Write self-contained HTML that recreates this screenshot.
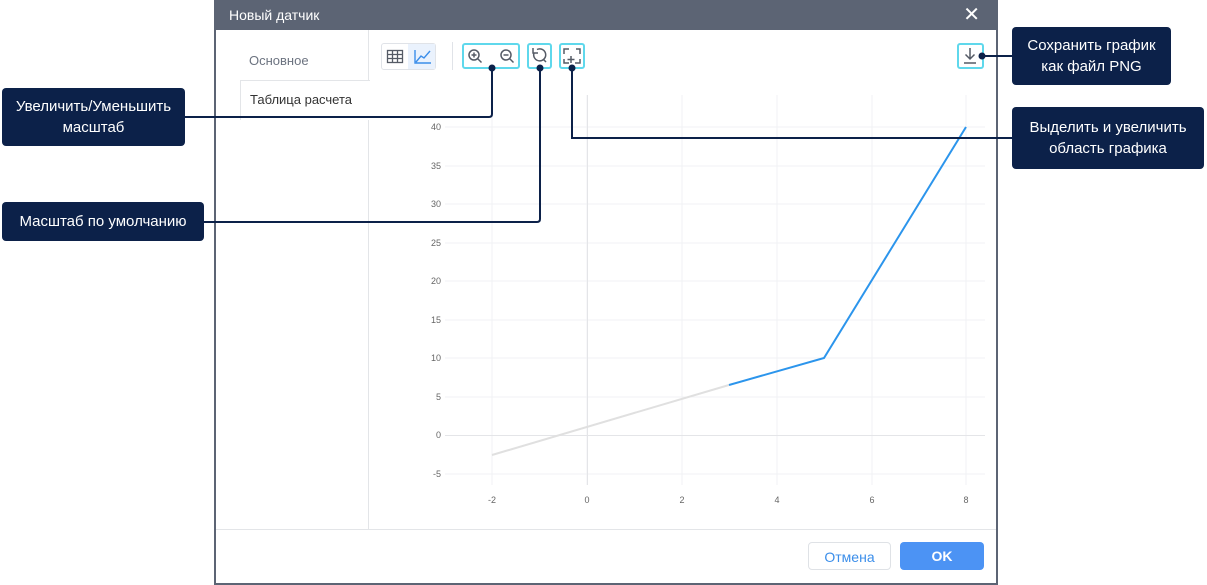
<!DOCTYPE html>
<html><head><meta charset="utf-8"><style>
*{margin:0;padding:0;box-sizing:border-box}
body{width:1207px;height:585px;background:#fff;position:relative;overflow:hidden;font-family:"Liberation Sans",sans-serif}
.dlg{position:absolute;left:214px;top:0;width:784px;height:585px;border:2px solid #5c6474;border-top:none;background:#fff}
.title{position:absolute;left:0;top:0;right:0;height:30px;background:#5c6474;color:#fff;font-size:14px;line-height:30px;padding-left:13px}
.x{position:absolute;right:16px;top:0;color:#fff;font-size:20px;line-height:30px}
.nav{position:absolute;left:0;top:30px;width:153px;bottom:53px;border-right:1px solid #e3e5e8}
.t1{position:absolute;left:33px;top:23px;color:#6c7380;font-size:13px}
.t2{position:absolute;left:24px;top:50px;width:130px;height:40px;border:1px solid #e3e5e8;border-right:none;border-bottom:none;background:#fff;font-size:13px;color:#333;padding:11px 0 0 9px}
.foot{position:absolute;left:0;right:0;bottom:53px;border-top:1px solid #e3e5e8}
.btn{position:absolute;top:542px;height:28px;border-radius:4px;font-size:14px;text-align:center;line-height:28px}
.call{position:absolute;background:#0c2149;color:#fff;font-size:15px;border-radius:4px;text-align:center;display:flex;align-items:center;justify-content:center;line-height:21px}
.hl{position:absolute;border:2px solid #5fd8ec;border-radius:3px}
</style></head><body>
<div class="dlg">
<div class="title">Новый датчик<span class="x">✕</span></div>
<div class="nav"><div class="t1">Основное</div><div class="t2">Таблица расчета</div></div>
<div class="foot"></div>
</div>
<div class="btn" style="left:808px;width:83px;border:1px solid #dfe2e6;color:#3b8eea">Отмена</div>
<div class="btn" style="left:900px;width:84px;background:#4c93f4;color:#fff;font-weight:bold">OK</div>

<!-- toolbar -->
<div style="position:absolute;left:381px;top:43px;width:55px;height:27px;border:1px solid #e0e3e8;border-radius:3px;background:#fff"></div>
<div style="position:absolute;left:408px;top:44px;width:27px;height:25px;background:#eaf2fd"></div>
<div style="position:absolute;left:452px;top:42px;width:1px;height:28px;background:#e0e3e8"></div>
<div class="hl" style="left:462px;top:43px;width:58px;height:26px"></div>
<div class="hl" style="left:527px;top:43px;width:25px;height:26px"></div>
<div class="hl" style="left:559px;top:43px;width:26px;height:26px"></div>
<div class="hl" style="left:957px;top:43px;width:27px;height:26px"></div>

<svg width="1207" height="585" style="position:absolute;left:0;top:0" font-family="Liberation Sans,sans-serif">
<!-- icons -->
<g fill="none" stroke="#555b66" stroke-width="1.3">
<rect x="387.5" y="50.5" width="15" height="12"/><path d="M387.5 54.5h15M387.5 58.5h15M392.5 50.5v12M397.5 50.5v12"/>
</g>
<path d="M415 50v13h16M416 62l5-6 3 2 6-7" fill="none" stroke="#3b8eea" stroke-width="1.4"/>
<g fill="none" stroke="#555b66" stroke-width="1.5">
<circle cx="474" cy="55" r="5"/><path d="M477.5 58.5l4 4M471.5 55h5M474 52.5v5"/>
<circle cx="506" cy="55" r="5"/><path d="M509.5 58.5l4 4M503.5 55h5"/>
<path d="M534 53a6 6 0 1 0 3-3.5"/><path d="M533 48v5h5"/><path d="M543 59l3 3"/>
<path d="M564 54v-5h5M576 49h4v5M564 59v4h5M575 63h5v-4M571 56v7M567.5 59.5h7"/>
<path d="M970 48v11M965.5 54.5l4.5 4.5 4.5-4.5M964 63h12"/>
</g>
<!-- chart grid -->
<g stroke="#f1f2f4" stroke-width="1">
<path d="M492 95v390M587 95v390M682 95v390M777 95v390M872 95v390M966 95v390"/>
<path d="M445 127h540M445 166h540M445 204h540M445 243h540M445 281h540M445 320h540M445 358h540M445 397h540M445 474h540"/>
</g>
<path d="M445 435.5h540M587.5 95v390" stroke="#e4e5e8"/>
<g font-size="9" fill="#666" text-anchor="end">
<text x="441" y="130">40</text><text x="441" y="169">35</text><text x="441" y="207">30</text><text x="441" y="246">25</text><text x="441" y="284">20</text><text x="441" y="323">15</text><text x="441" y="361">10</text><text x="441" y="400">5</text><text x="441" y="438">0</text><text x="441" y="477">-5</text>
</g>
<g font-size="9" fill="#666" text-anchor="middle">
<text x="492" y="503">-2</text><text x="587" y="503">0</text><text x="682" y="503">2</text><text x="777" y="503">4</text><text x="872" y="503">6</text><text x="966" y="503">8</text>
</g>
<path d="M492 455L729 385" stroke="#e0e0e0" stroke-width="2" fill="none"/>
<path d="M729 385L824 358L966 127" stroke="#2c95ec" stroke-width="2" fill="none"/>
<!-- callout lines -->
<g stroke="#0c2149" stroke-width="2" fill="none">
<path d="M184 117H489q3 0 3-3V67"/>
<path d="M204 222H537q3 0 3-3V67"/>
<path d="M572 67V138H1012"/>
<path d="M983 56H1012"/>
</g>
<g fill="#0c2149"><circle cx="492" cy="68" r="3.5"/><circle cx="540" cy="68" r="3.5"/><circle cx="572" cy="68" r="3.5"/><circle cx="982" cy="56" r="3.5"/></g>
</svg>
<div class="call" style="left:2px;top:88px;width:183px;height:58px">Увеличить/Уменьшить<br>масштаб</div>
<div class="call" style="left:2px;top:202px;width:202px;height:39px">Масштаб по умолчанию</div>
<div class="call" style="left:1012px;top:27px;width:159px;height:58px">Сохранить график<br>как файл PNG</div>
<div class="call" style="left:1012px;top:107px;width:192px;height:62px">Выделить и увеличить<br>область графика</div>
</body></html>
